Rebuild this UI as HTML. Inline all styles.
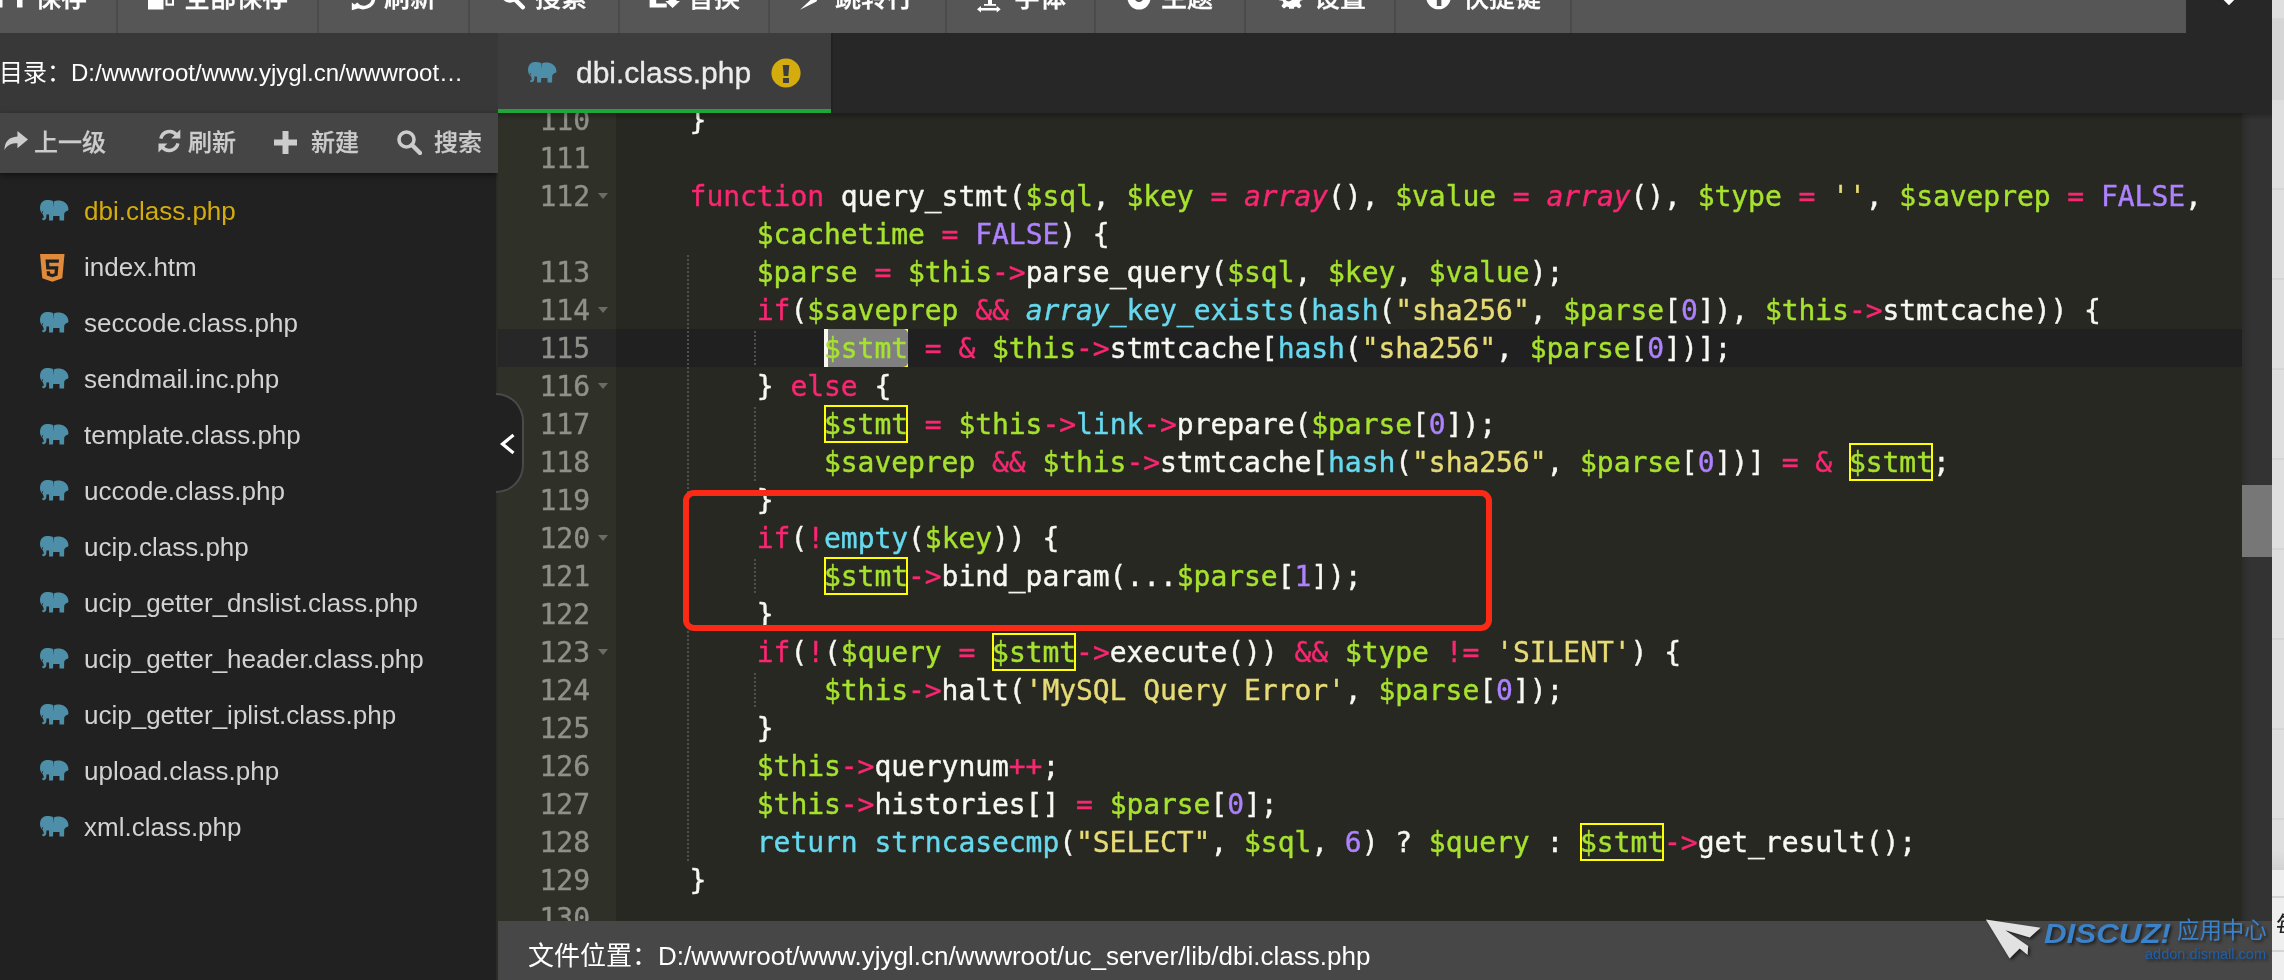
<!DOCTYPE html>
<html lang="zh-CN">
<head>
<meta charset="utf-8">
<title>在线编辑器</title>
<style>
*{box-sizing:border-box;margin:0;padding:0}
html,body{width:2284px;height:980px;overflow:hidden;background:#272727}
body{position:relative;font-family:"Liberation Sans","Noto Sans CJK SC",sans-serif;color:#fff}
#wrap{position:absolute;left:0;top:0;width:2284px;height:980px;overflow:hidden;will-change:transform}
/* toolbar */
#tb{position:absolute;left:0;top:-37px;width:2186px;height:70px;background:#565656}
#tb .it{position:absolute;top:0;height:70px;border-right:2px solid #4b4b4b}
#tb .tx{-webkit-text-stroke:.3px;position:absolute;top:0px;height:70px;line-height:70px;font-size:26px;font-weight:500;color:#fff;white-space:nowrap;margin-left:-2px}
#tb svg{position:absolute}
/* right strip */
#rs{position:absolute;left:2272px;top:0;width:12px;height:980px;background:#dfdfdf}
#rs i{position:absolute;left:0;width:12px;height:2px;background:#d5d5d5}
/* sidebar */
#sb{position:absolute;left:0;top:33px;width:498px;height:947px;background:linear-gradient(90deg,#212121 496px,#2b2c27 496px)}
#pth{position:absolute;left:0;top:0;width:498px;height:80px;background:#383838;line-height:79px;font-size:24px;white-space:nowrap;overflow:hidden;color:#fff}
#act{position:absolute;left:0;top:80px;width:498px;height:60px;background:#454545;box-shadow:0 2px 6px rgba(0,0,0,.5)}
#act span{-webkit-text-stroke:.25px;position:absolute;top:0;height:60px;line-height:60px;font-size:24px;font-weight:500;color:#ccc;white-space:nowrap}
#act svg{position:absolute}
.fi{position:absolute;left:84px;height:56px;line-height:56px;font-size:26px;color:#d2d2d2;white-space:nowrap}
.fi.on{color:#d4ac0d}
.ic{position:absolute;left:40px}
/* tabs */
#tab{position:absolute;left:498px;top:33px;width:333px;height:80px;background:#3d3d3d;border-bottom:4px solid #20a53a}
#tab .nm{-webkit-text-stroke:.3px;position:absolute;left:78px;top:-1px;height:81px;line-height:81px;font-size:30px;color:#ececec;white-space:nowrap}
/* editor */
#ed{position:absolute;left:498px;top:113px;width:1774px;height:808px;background:#272822;overflow:hidden}
#gut{position:absolute;left:0;top:0;width:118px;height:808px;background:#2f3129}
#al{position:absolute;left:0;top:216px;width:1744px;height:38px;background:#202020}
#alg{position:absolute;left:0;top:216px;width:118px;height:38px;background:#272727}
.gn,.cl{font-family:"DejaVu Sans Mono","Liberation Mono",monospace;font-size:28px;line-height:38px;height:38px;white-space:pre;position:absolute}
.gn{left:0;width:92px;text-align:right;color:#8f908a}
.cl{left:124.4px;color:#f8f8f2;letter-spacing:-0.058px}
.gn,.cl{-webkit-text-stroke:.4px;margin-top:1px}
.k,.ki{color:#f92672}.v{color:#a6e22e}.f,.fi2{color:#66d9ef}.n{color:#ae81ff}.s{color:#e6db74}
.ki,.fi2{font-style:italic}
.fold{position:absolute;left:100px;width:0;height:0;border-left:5px solid transparent;border-right:5px solid transparent;border-top:6px solid #6b6c66}
.ig{position:absolute;width:2px;background-image:linear-gradient(#4f504a 50%,transparent 50%);background-size:2px 4px}
.sw{position:absolute;width:84px;height:38px;border:2px solid #ffff00}
#vs{position:absolute;left:1744px;top:0;width:30px;height:808px;background:linear-gradient(90deg,#2c2c2c,#333 8px)}
#vs b{position:absolute;left:0;top:372px;width:30px;height:72px;background:#777;display:block}
/* status */
#st{position:absolute;left:498px;top:921px;width:1774px;height:70px;background:#474747;line-height:70px;font-size:26px;color:#fff;white-space:nowrap;padding-left:30px}
/* red annotation */
#red{position:absolute;left:683px;top:490px;width:809px;height:141px;border:6px solid #fb2a17;border-radius:11px}
/* collapse */
#col{position:absolute;left:496px;top:393px;width:28px;height:100px;background:#212121;border:2px solid #4a4a4a;border-left:none;border-radius:0 28px 28px 0}
</style>
</head>
<body>
<div id="wrap">
<div id="tb">
<i class="it" style="left:0;width:118px"></i><i class="it" style="left:118px;width:201px"></i><i class="it" style="left:319px;width:151px"></i><i class="it" style="left:470px;width:150px"></i><i class="it" style="left:620px;width:150px"></i><i class="it" style="left:770px;width:176.5px"></i><i class="it" style="left:946px;width:150px"></i><i class="it" style="left:1096px;width:150px"></i><i class="it" style="left:1246px;width:150px"></i><i class="it" style="left:1396px;width:176px"></i>
<span class="tx" style="left:37px">保存</span>
<span class="tx" style="left:186px">全部保存</span>
<span class="tx" style="left:386px">刷新</span>
<span class="tx" style="left:537px">搜索</span>
<span class="tx" style="left:690px">替换</span>
<span class="tx" style="left:837px">跳转行</span>
<span class="tx" style="left:1016px">字体</span>
<span class="tx" style="left:1163px">主题</span>
<span class="tx" style="left:1316px">设置</span>
<span class="tx" style="left:1465px">快捷键</span>
<svg style="left:0;top:37px" width="1600" height="33" viewBox="0 0 1600 33">
<g fill="#fff">
<path d="M-3 -14h25.500v21.500h-5.500v-9h-14.500v9h-5.500z"/>
<rect x="148" y="-8" width="15.500" height="17.500"/><path d="M165.500 -12h8.500v17.700h-8.500zM167.500 -12h4.500v15.400h-4.500z" fill-rule="evenodd"/>
<path d="M373.600 -2.500a10 10 0 0 1-17.800 6.200" fill="none" stroke="#fff" stroke-width="3.600"/><path d="M351.800 2.500l7.700 5.500-7.700 2.200z"/>
<circle cx="510" cy="-6.500" r="7.500" fill="none" stroke="#fff" stroke-width="3.600"/><path d="M515.500 0l7.300 7.300" stroke="#fff" stroke-width="4.400" stroke-linecap="round"/>
<path d="M649.600 -10h6.600v13.500h10.500v4h-17.100z"/><path d="M668.500 -8h8v9h3.500l-7.400 7-7.400-7h3.300z"/>
<path d="M800 9.800l11.500-10.800h6l-1 2.500z"/>
<path d="M988 -8h4v12h4v1.800h-12v-1.800h4z"/><path d="M977 9.200l4-3.200v2h15.700v-2l4 3.200-4 3.200v-2h-15.700v2z"/>
<path d="M1127.500 -2a11.500 11.500 0 0 0 23 0a11.500 11.500 0 0 0-23 0zM1134.500 -2.500a4.500 4.500 0 0 1 9 0a4.500 4.500 0 0 1-9 0z" fill-rule="evenodd"/>
<path d="M1279 -6v6.200l3.600 .6 .9 2.200-2.100 3 2.500 2.400 3-2 2.100 .8v1.600h5v-1.600l2.100-.8 3 2 2.500-2.400-2.100-3 .9-2.200 2.100-.6v-6.200zM1284.300 -3a4.400 4.400 0 0 0 8.800 0a4.400 4.400 0 0 0-8.800 0z" fill-rule="evenodd"/>
<path d="M1426.200 -3a12.300 12.300 0 0 0 24.600 0zM1436.800 -3h4.600v9h-4.600z" fill-rule="evenodd"/>
</g>
</svg>
</div>

<div id="rs"><u style="position:absolute;left:0;top:18px;width:12px;height:81px;background:#d6d6d6"></u><i style="top:98px"></i><i style="top:188px"></i><i style="top:278px"></i><i style="top:368px"></i><i style="top:458px"></i><i style="top:548px"></i><i style="top:638px"></i><i style="top:728px"></i><i style="top:818px"></i><u style="position:absolute;left:0;top:850px;width:12px;height:20px;background:linear-gradient(#dfdfdf,#d2d2d2)"></u><u style="position:absolute;left:0;top:870px;width:12px;height:110px;background:#efefef"></u><i style="top:896px"></i><i style="top:950px"></i><span style="position:absolute;left:4px;top:914px;font-size:24px;line-height:24px;color:#222;white-space:nowrap">每</span></div>

<div id="sb">
<div id="pth"><span style="position:absolute;left:-1px;top:0">目录：D:/wwwroot/www.yjygl.cn/wwwroot…</span></div>
<div id="act">
<svg style="left:3.500px;top:18px" width="24" height="18.500" viewBox="0 0 25 20.500" preserveAspectRatio="none"><path fill="#ccc" d="M14 0l11 9.500-11 9.500v-5.500c-6.500 0-10.500 2-13.500 7.500c0-9 4.500-14.500 13.500-15z"/></svg>
<span style="left:34px">上一级</span>
<svg style="left:158px;top:16px" width="22.800" height="24" viewBox="0 0 24 25" preserveAspectRatio="none"><g fill="none" stroke="#ccc" stroke-width="3.600"><path d="M3 10a9.500 9.500 0 0 1 16.500-4"/><path d="M21 15a9.500 9.500 0 0 1-16.500 4"/></g><path fill="#ccc" d="M23.500 .5v9.500h-9.500zM.5 24.500v-9.500h9.500z"/></svg>
<span style="left:188px">刷新</span>
<svg style="left:274px;top:18px" width="23" height="23" viewBox="0 0 23 23"><path fill="#ccc" d="M8.500 0h6v8.500h8.500v6h-8.500v8.500h-6v-8.500h-8.500v-6h8.500z"/></svg>
<span style="left:311px">新建</span>
<svg style="left:397px;top:17px" width="25" height="25" viewBox="0 0 25 25"><circle cx="9.500" cy="9.500" r="7.500" fill="none" stroke="#ccc" stroke-width="3.600"/><path d="M15 15l8 8" stroke="#ccc" stroke-width="4.400" stroke-linecap="round"/></svg>
<span style="left:434px">搜索</span>
</div>
<svg class="ic" style="top:167px" width="29" height="22" viewBox="0 0 29 22"><path fill="#4d8fa8" fill-rule="evenodd" d="M6.500 0C9.500 -.2 12 .3 13.200 1.300L13.550 7.500L13.900 1.500C15.500 .5 18 .3 20 .6C25 1.400 28.400 5 28.400 9C28.400 10 28.200 10.600 27.800 10.800C26.500 11 25 12 24.200 13.500L24.100 20.500L19.500 20.500L19.500 16L13.200 16L13 20.400L9.100 20.400L9 14.500C8 14.800 7.200 14.600 6.600 14L6.300 17C6.500 19 5 20.400 3.400 20.200C2.300 20 1.800 19 2.200 18.200C3 18.500 3.800 18 3.700 17L2.800 14C1 13 0 10.500 0 8C0 3.500 2.500 .3 6.500 0ZM2.500 11.300a.7 .7 0 1 0 .01 0z"/></svg>
<div class="fi on" style="top:150px">dbi.class.php</div>
<svg class="ic" style="top:221px" width="25" height="28" viewBox="0 0 25 28"><path fill="#e08a3c" d="M0 0h24.500l-2.200 24.300-10 3.500-10-3.500z"/><path fill="#212121" d="M5.500 5.500h13.500l-.3 3.300h-9.600l.3 3.400h9l-.8 9.300-5.300 1.800-5.300-1.800-.4-4.200h3.300l.2 1.900 2.200.7 2.200-.7.300-3.700h-8.500z"/></svg>
<div class="fi" style="top:206px">index.htm</div>
<svg class="ic" style="top:279px" width="29" height="22" viewBox="0 0 29 22"><path fill="#4d8fa8" fill-rule="evenodd" d="M6.500 0C9.500 -.2 12 .3 13.200 1.300L13.550 7.500L13.900 1.500C15.500 .5 18 .3 20 .6C25 1.400 28.400 5 28.400 9C28.400 10 28.200 10.600 27.800 10.800C26.500 11 25 12 24.200 13.500L24.100 20.500L19.500 20.500L19.500 16L13.200 16L13 20.400L9.100 20.400L9 14.500C8 14.800 7.200 14.600 6.600 14L6.300 17C6.500 19 5 20.400 3.400 20.200C2.300 20 1.800 19 2.200 18.200C3 18.500 3.800 18 3.700 17L2.800 14C1 13 0 10.500 0 8C0 3.500 2.500 .3 6.500 0ZM2.500 11.300a.7 .7 0 1 0 .01 0z"/></svg>
<div class="fi" style="top:262px">seccode.class.php</div>
<svg class="ic" style="top:335px" width="29" height="22" viewBox="0 0 29 22"><path fill="#4d8fa8" fill-rule="evenodd" d="M6.500 0C9.500 -.2 12 .3 13.200 1.300L13.550 7.500L13.900 1.500C15.500 .5 18 .3 20 .6C25 1.400 28.400 5 28.400 9C28.400 10 28.200 10.600 27.800 10.800C26.500 11 25 12 24.200 13.500L24.100 20.500L19.500 20.500L19.500 16L13.200 16L13 20.400L9.100 20.400L9 14.500C8 14.800 7.200 14.600 6.600 14L6.300 17C6.500 19 5 20.400 3.400 20.200C2.300 20 1.800 19 2.200 18.200C3 18.500 3.800 18 3.700 17L2.800 14C1 13 0 10.500 0 8C0 3.500 2.500 .3 6.500 0ZM2.500 11.300a.7 .7 0 1 0 .01 0z"/></svg>
<div class="fi" style="top:318px">sendmail.inc.php</div>
<svg class="ic" style="top:391px" width="29" height="22" viewBox="0 0 29 22"><path fill="#4d8fa8" fill-rule="evenodd" d="M6.500 0C9.500 -.2 12 .3 13.200 1.300L13.550 7.500L13.900 1.500C15.500 .5 18 .3 20 .6C25 1.400 28.400 5 28.400 9C28.400 10 28.200 10.600 27.800 10.800C26.500 11 25 12 24.200 13.500L24.100 20.500L19.500 20.500L19.500 16L13.200 16L13 20.400L9.100 20.400L9 14.500C8 14.800 7.200 14.600 6.600 14L6.300 17C6.500 19 5 20.400 3.400 20.200C2.300 20 1.800 19 2.200 18.200C3 18.500 3.800 18 3.700 17L2.800 14C1 13 0 10.500 0 8C0 3.500 2.500 .3 6.500 0ZM2.500 11.300a.7 .7 0 1 0 .01 0z"/></svg>
<div class="fi" style="top:374px">template.class.php</div>
<svg class="ic" style="top:447px" width="29" height="22" viewBox="0 0 29 22"><path fill="#4d8fa8" fill-rule="evenodd" d="M6.500 0C9.500 -.2 12 .3 13.200 1.300L13.550 7.500L13.900 1.500C15.500 .5 18 .3 20 .6C25 1.400 28.400 5 28.400 9C28.400 10 28.200 10.600 27.800 10.800C26.500 11 25 12 24.200 13.500L24.100 20.500L19.500 20.500L19.500 16L13.200 16L13 20.400L9.100 20.400L9 14.500C8 14.800 7.200 14.600 6.600 14L6.300 17C6.500 19 5 20.400 3.400 20.200C2.300 20 1.800 19 2.200 18.200C3 18.500 3.800 18 3.700 17L2.800 14C1 13 0 10.500 0 8C0 3.500 2.500 .3 6.500 0ZM2.500 11.300a.7 .7 0 1 0 .01 0z"/></svg>
<div class="fi" style="top:430px">uccode.class.php</div>
<svg class="ic" style="top:503px" width="29" height="22" viewBox="0 0 29 22"><path fill="#4d8fa8" fill-rule="evenodd" d="M6.500 0C9.500 -.2 12 .3 13.200 1.300L13.550 7.500L13.900 1.500C15.500 .5 18 .3 20 .6C25 1.400 28.400 5 28.400 9C28.400 10 28.200 10.600 27.800 10.800C26.500 11 25 12 24.200 13.500L24.100 20.500L19.500 20.500L19.500 16L13.200 16L13 20.400L9.100 20.400L9 14.500C8 14.800 7.200 14.600 6.600 14L6.300 17C6.500 19 5 20.400 3.400 20.200C2.300 20 1.800 19 2.200 18.200C3 18.500 3.800 18 3.700 17L2.800 14C1 13 0 10.500 0 8C0 3.500 2.500 .3 6.500 0ZM2.500 11.300a.7 .7 0 1 0 .01 0z"/></svg>
<div class="fi" style="top:486px">ucip.class.php</div>
<svg class="ic" style="top:559px" width="29" height="22" viewBox="0 0 29 22"><path fill="#4d8fa8" fill-rule="evenodd" d="M6.500 0C9.500 -.2 12 .3 13.200 1.300L13.550 7.500L13.900 1.500C15.500 .5 18 .3 20 .6C25 1.400 28.400 5 28.400 9C28.400 10 28.200 10.600 27.800 10.800C26.500 11 25 12 24.200 13.500L24.100 20.500L19.500 20.500L19.500 16L13.200 16L13 20.400L9.100 20.400L9 14.500C8 14.800 7.200 14.600 6.600 14L6.300 17C6.500 19 5 20.400 3.400 20.200C2.300 20 1.800 19 2.200 18.200C3 18.500 3.800 18 3.700 17L2.800 14C1 13 0 10.500 0 8C0 3.500 2.500 .3 6.500 0ZM2.500 11.300a.7 .7 0 1 0 .01 0z"/></svg>
<div class="fi" style="top:542px">ucip_getter_dnslist.class.php</div>
<svg class="ic" style="top:615px" width="29" height="22" viewBox="0 0 29 22"><path fill="#4d8fa8" fill-rule="evenodd" d="M6.500 0C9.500 -.2 12 .3 13.200 1.300L13.550 7.500L13.900 1.500C15.500 .5 18 .3 20 .6C25 1.400 28.400 5 28.400 9C28.400 10 28.200 10.600 27.800 10.800C26.500 11 25 12 24.200 13.500L24.100 20.500L19.500 20.500L19.500 16L13.200 16L13 20.400L9.100 20.400L9 14.500C8 14.800 7.200 14.600 6.600 14L6.300 17C6.500 19 5 20.400 3.400 20.200C2.300 20 1.800 19 2.200 18.200C3 18.500 3.800 18 3.700 17L2.800 14C1 13 0 10.500 0 8C0 3.500 2.500 .3 6.500 0ZM2.500 11.300a.7 .7 0 1 0 .01 0z"/></svg>
<div class="fi" style="top:598px">ucip_getter_header.class.php</div>
<svg class="ic" style="top:671px" width="29" height="22" viewBox="0 0 29 22"><path fill="#4d8fa8" fill-rule="evenodd" d="M6.500 0C9.500 -.2 12 .3 13.200 1.300L13.550 7.500L13.900 1.500C15.500 .5 18 .3 20 .6C25 1.400 28.400 5 28.400 9C28.400 10 28.200 10.600 27.800 10.800C26.500 11 25 12 24.200 13.500L24.100 20.500L19.500 20.500L19.500 16L13.200 16L13 20.400L9.100 20.400L9 14.500C8 14.800 7.200 14.600 6.600 14L6.300 17C6.500 19 5 20.400 3.400 20.200C2.300 20 1.800 19 2.200 18.200C3 18.500 3.800 18 3.700 17L2.800 14C1 13 0 10.500 0 8C0 3.500 2.500 .3 6.500 0ZM2.500 11.300a.7 .7 0 1 0 .01 0z"/></svg>
<div class="fi" style="top:654px">ucip_getter_iplist.class.php</div>
<svg class="ic" style="top:727px" width="29" height="22" viewBox="0 0 29 22"><path fill="#4d8fa8" fill-rule="evenodd" d="M6.500 0C9.500 -.2 12 .3 13.200 1.300L13.550 7.500L13.900 1.500C15.500 .5 18 .3 20 .6C25 1.400 28.400 5 28.400 9C28.400 10 28.200 10.600 27.800 10.800C26.500 11 25 12 24.200 13.500L24.100 20.500L19.500 20.500L19.500 16L13.200 16L13 20.400L9.100 20.400L9 14.500C8 14.800 7.200 14.600 6.600 14L6.300 17C6.500 19 5 20.400 3.400 20.200C2.300 20 1.800 19 2.200 18.200C3 18.500 3.800 18 3.700 17L2.800 14C1 13 0 10.500 0 8C0 3.500 2.500 .3 6.500 0ZM2.500 11.300a.7 .7 0 1 0 .01 0z"/></svg>
<div class="fi" style="top:710px">upload.class.php</div>
<svg class="ic" style="top:783px" width="29" height="22" viewBox="0 0 29 22"><path fill="#4d8fa8" fill-rule="evenodd" d="M6.500 0C9.500 -.2 12 .3 13.200 1.300L13.550 7.500L13.900 1.500C15.500 .5 18 .3 20 .6C25 1.400 28.400 5 28.400 9C28.400 10 28.200 10.600 27.800 10.800C26.500 11 25 12 24.200 13.500L24.100 20.500L19.500 20.500L19.500 16L13.200 16L13 20.400L9.100 20.400L9 14.500C8 14.800 7.200 14.600 6.600 14L6.300 17C6.500 19 5 20.400 3.400 20.200C2.300 20 1.800 19 2.200 18.200C3 18.500 3.800 18 3.700 17L2.800 14C1 13 0 10.500 0 8C0 3.500 2.500 .3 6.500 0ZM2.500 11.300a.7 .7 0 1 0 .01 0z"/></svg>
<div class="fi" style="top:766px">xml.class.php</div>
</div>
<div id="tab"><svg style="position:absolute;left:30px;top:29px" width="29" height="22" viewBox="0 0 29 22"><path fill="#4d8fa8" fill-rule="evenodd" d="M6.500 0C9.500 -.2 12 .3 13.200 1.300L13.550 7.500L13.900 1.500C15.500 .5 18 .3 20 .6C25 1.400 28.400 5 28.400 9C28.400 10 28.200 10.600 27.800 10.800C26.500 11 25 12 24.200 13.500L24.100 20.500L19.500 20.500L19.500 16L13.200 16L13 20.400L9.100 20.400L9 14.500C8 14.800 7.200 14.600 6.600 14L6.300 17C6.500 19 5 20.400 3.400 20.200C2.300 20 1.800 19 2.200 18.200C3 18.500 3.800 18 3.700 17L2.800 14C1 13 0 10.500 0 8C0 3.500 2.500 .3 6.500 0ZM2.500 11.300a.7 .7 0 1 0 .01 0z"/></svg><span class="nm">dbi.class.php</span><svg style="position:absolute;left:273px;top:25px" width="30" height="30" viewBox="0 0 30 30"><circle cx="15" cy="15" r="14.600" fill="#d4ac0d"/><path fill="#3d3d3d" d="M11.700 7h6.600l-1 11h-4.600zM12 20h6v5h-6z"/></svg></div>
<div style="position:absolute;left:831px;top:33px;width:2px;height:80px;background:#222"></div>
<svg style="position:absolute;left:2218px;top:0" width="24" height="8" viewBox="0 0 24 8"><path d="M5.200 -.5L16.700 -.5L10.950 5.300z" fill="#fff"/></svg>

<div id="ed">
<div id="gut"></div>
<div id="al"></div><div id="alg"></div>
<div class="ig" style="left:189px;top:142px;height:606px"></div>
<div class="ig" style="left:256px;top:218px;height:36px"></div>
<div class="ig" style="left:256px;top:294px;height:74px"></div>
<div class="ig" style="left:256px;top:446px;height:36px"></div>
<div class="ig" style="left:256px;top:560px;height:36px"></div>
<div class="sw" style="left:326px;top:216px"></div>
<div id="sel" style="position:absolute;left:326px;top:216px;width:84px;height:38px;background:#808080;border-radius:5px"></div>
<div id="cur" style="position:absolute;left:326px;top:216px;width:4px;height:38px;background:#f8f8f0"></div>
<div class="sw" style="left:326px;top:292px"></div>
<div class="sw" style="left:1351px;top:330px"></div>
<div class="sw" style="left:326px;top:444px"></div>
<div class="sw" style="left:494px;top:520px"></div>
<div class="sw" style="left:1082px;top:710px"></div>
<div class="gn" style="top:-12px">110</div>
<div class="cl" style="top:-12px">    }</div>
<div class="gn" style="top:26px">111</div>
<div class="gn" style="top:64px">112</div>
<div class="fold" style="top:80px"></div>
<div class="cl" style="top:64px">    <span class="k">function</span> query_stmt(<span class="v">$sql</span>, <span class="v">$key</span> <span class="k">=</span> <span class="ki">array</span>(), <span class="v">$value</span> <span class="k">=</span> <span class="ki">array</span>(), <span class="v">$type</span> <span class="k">=</span> <span class="s">''</span>, <span class="v">$saveprep</span> <span class="k">=</span> <span class="n">FALSE</span>,</div>
<div class="cl" style="top:102px">        <span class="v">$cachetime</span> <span class="k">=</span> <span class="n">FALSE</span>) {</div>
<div class="gn" style="top:140px">113</div>
<div class="cl" style="top:140px">        <span class="v">$parse</span> <span class="k">=</span> <span class="v">$this</span><span class="k">-&gt;</span>parse_query(<span class="v">$sql</span>, <span class="v">$key</span>, <span class="v">$value</span>);</div>
<div class="gn" style="top:178px">114</div>
<div class="fold" style="top:194px"></div>
<div class="cl" style="top:178px">        <span class="k">if</span>(<span class="v">$saveprep</span> <span class="k">&amp;&amp;</span> <span class="fi2">array</span><span class="f">_key_exists</span>(<span class="f">hash</span>(<span class="s">"sha256"</span>, <span class="v">$parse</span>[<span class="n">0</span>]), <span class="v">$this</span><span class="k">-&gt;</span>stmtcache)) {</div>
<div class="gn" style="top:216px">115</div>
<div class="cl" style="top:216px">            <span class="v">$stmt</span> <span class="k">=</span> <span class="k">&amp;</span> <span class="v">$this</span><span class="k">-&gt;</span>stmtcache[<span class="f">hash</span>(<span class="s">"sha256"</span>, <span class="v">$parse</span>[<span class="n">0</span>])];</div>
<div class="gn" style="top:254px">116</div>
<div class="fold" style="top:270px"></div>
<div class="cl" style="top:254px">        } <span class="k">else</span> {</div>
<div class="gn" style="top:292px">117</div>
<div class="cl" style="top:292px">            <span class="v">$stmt</span> <span class="k">=</span> <span class="v">$this</span><span class="k">-&gt;</span><span class="f">link</span><span class="k">-&gt;</span>prepare(<span class="v">$parse</span>[<span class="n">0</span>]);</div>
<div class="gn" style="top:330px">118</div>
<div class="cl" style="top:330px">            <span class="v">$saveprep</span> <span class="k">&amp;&amp;</span> <span class="v">$this</span><span class="k">-&gt;</span>stmtcache[<span class="f">hash</span>(<span class="s">"sha256"</span>, <span class="v">$parse</span>[<span class="n">0</span>])] <span class="k">=</span> <span class="k">&amp;</span> <span class="v">$stmt</span>;</div>
<div class="gn" style="top:368px">119</div>
<div class="cl" style="top:368px">        }</div>
<div class="gn" style="top:406px">120</div>
<div class="fold" style="top:422px"></div>
<div class="cl" style="top:406px">        <span class="k">if</span>(<span class="k">!</span><span class="f">empty</span>(<span class="v">$key</span>)) {</div>
<div class="gn" style="top:444px">121</div>
<div class="cl" style="top:444px">            <span class="v">$stmt</span><span class="k">-&gt;</span>bind_param(...<span class="v">$parse</span>[<span class="n">1</span>]);</div>
<div class="gn" style="top:482px">122</div>
<div class="cl" style="top:482px">        }</div>
<div class="gn" style="top:520px">123</div>
<div class="fold" style="top:536px"></div>
<div class="cl" style="top:520px">        <span class="k">if</span>(<span class="k">!</span>(<span class="v">$query</span> <span class="k">=</span> <span class="v">$stmt</span><span class="k">-&gt;</span>execute()) <span class="k">&amp;&amp;</span> <span class="v">$type</span> <span class="k">!=</span> <span class="s">'SILENT'</span>) {</div>
<div class="gn" style="top:558px">124</div>
<div class="cl" style="top:558px">            <span class="v">$this</span><span class="k">-&gt;</span>halt(<span class="s">'MySQL Query Error'</span>, <span class="v">$parse</span>[<span class="n">0</span>]);</div>
<div class="gn" style="top:596px">125</div>
<div class="cl" style="top:596px">        }</div>
<div class="gn" style="top:634px">126</div>
<div class="cl" style="top:634px">        <span class="v">$this</span><span class="k">-&gt;</span>querynum<span class="k">++</span>;</div>
<div class="gn" style="top:672px">127</div>
<div class="cl" style="top:672px">        <span class="v">$this</span><span class="k">-&gt;</span>histories[] <span class="k">=</span> <span class="v">$parse</span>[<span class="n">0</span>];</div>
<div class="gn" style="top:710px">128</div>
<div class="cl" style="top:710px">        <span class="f">return</span> <span class="f">strncasecmp</span>(<span class="s">"SELECT"</span>, <span class="v">$sql</span>, <span class="n">6</span>) ? <span class="v">$query</span> : <span class="v">$stmt</span><span class="k">-&gt;</span>get_result();</div>
<div class="gn" style="top:748px">129</div>
<div class="cl" style="top:748px">    }</div>
<div class="gn" style="top:786px">130</div>
<div id="vs"><b></b></div>
<div style="position:absolute;left:0;top:0;width:1774px;height:7px;background:linear-gradient(rgba(0,0,0,.28),rgba(0,0,0,0))"></div>
</div>
<div id="st">文件位置：D:/wwwroot/www.yjygl.cn/wwwroot/uc_server/lib/dbi.class.php</div>

<div id="col"><svg style="position:absolute;left:3px;top:37px" width="18" height="24" viewBox="0 0 18 24"><path d="M14.500 3l-11 9 11 9" fill="none" stroke="#fff" stroke-width="3.200"/></svg></div>
<div id="red"></div>
<svg id="wm" style="position:absolute;left:1980px;top:912px;filter:drop-shadow(2px 2px 1.5px rgba(0,0,0,.55))" width="292" height="60" viewBox="0 0 292 60">
<g>
<path fill="#e2e2e2" d="M5.800 7.600l54.800 8.200-10.800 9.600-24.400-7.200 22.800 15.800-.6 9-7.900-6.600-10.100 10.200z"/>
<text x="64" y="30.500" font-family="'Liberation Sans',sans-serif" font-weight="bold" font-style="italic" font-size="28" fill="#3b82c8" textLength="127" lengthAdjust="spacingAndGlyphs">DISCUZ!</text>
<text x="197" y="26" font-family="'Noto Sans CJK SC',sans-serif" font-weight="400" font-size="22.400" fill="#3b82c8">应用中心</text>
<text x="165" y="47" font-family="'Liberation Sans',sans-serif" font-size="15.500" fill="#1f5fa9" textLength="121" lengthAdjust="spacingAndGlyphs">addon.dismall.com</text>
</g>
</svg>

</div>
</body>
</html>
